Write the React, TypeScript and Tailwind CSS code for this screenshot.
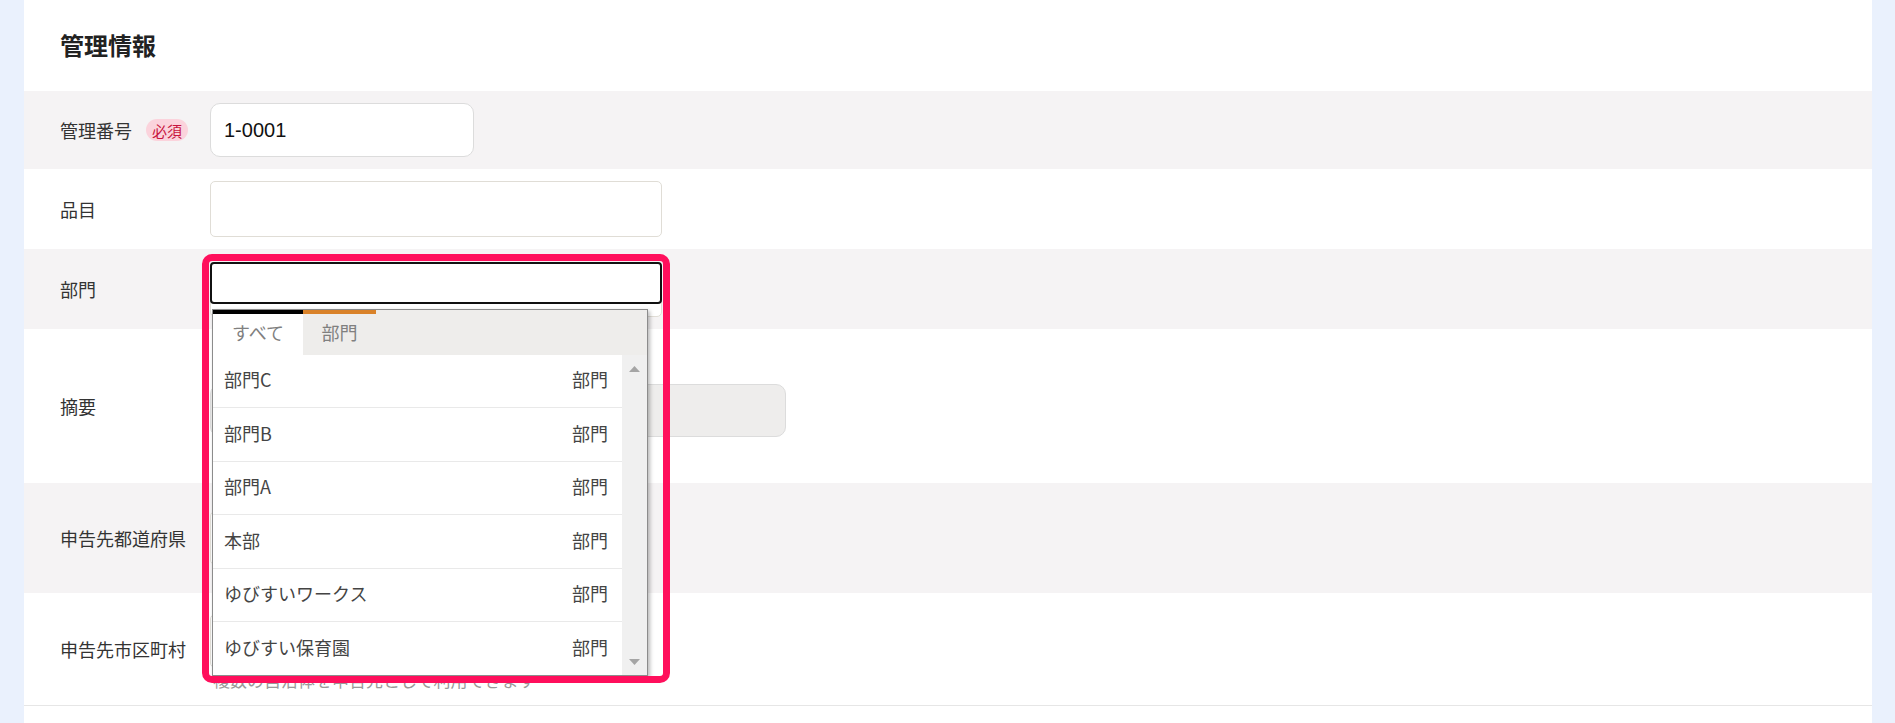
import React from "react";

const items = ["部門C", "部門B", "部門A", "本部", "ゆびすいワークス", "ゆびすい保育園"];

function Badge() {
  return (
    <span className="ml-[14px] inline-flex h-[22px] items-center rounded-full bg-[#fbd3dc] px-[6px] text-[15px] leading-none text-[#c8163f]">
      必須
    </span>
  );
}

function DeptDropdown() {
  return (
    <div className="absolute left-[1px] top-[46px] z-10 flex h-[367px] w-[436px] flex-col border border-[#8c8c8c] bg-white shadow-[2px_2px_4px_rgba(0,0,0,0.28)]">
      {/* tabs */}
      <div className="flex h-[45px] shrink-0 bg-[#eeedeb]">
        <div className="flex w-[90px] items-center justify-center border-t-4 border-black bg-white pb-[4px] text-[18px] text-[#808080]">
          すべて
        </div>
        <div className="flex w-[73px] items-center justify-center border-t-4 border-[#d98229] pb-[4px] text-[18px] text-[#808080]">
          部門
        </div>
      </div>

      <div className="flex min-h-0 flex-1">
        <div className="flex flex-1 flex-col">
          {items.map((name, i) => (
            <div
              key={name}
              className={`flex flex-1 items-center justify-between pb-[2px] pl-[11px] pr-[14px] text-[18px] text-[#444] ${
                i < items.length - 1 ? "border-b border-[#e9e9e9]" : ""
              }`}
            >
              <span>{name}</span>
              <span>部門</span>
            </div>
          ))}
        </div>
        {/* scrollbar */}
        <div className="flex w-[25px] flex-col items-center justify-between bg-[#f0f0f0] pb-[10px] pt-[11px]">
          <svg width="11" height="6" viewBox="0 0 11 6">
            <path d="M0 6 L5.5 0 L11 6 Z" fill="#a5a5a5" />
          </svg>
          <svg width="11" height="6" viewBox="0 0 11 6">
            <path d="M0 0 L5.5 6 L11 0 Z" fill="#a5a5a5" />
          </svg>
        </div>
      </div>
    </div>
  );
}

export default function App() {
  const label = "w-[150px] shrink-0 text-[18px] text-[#333]";

  return (
    <div className="min-h-screen bg-[#eaf1fd] pl-[24px] pr-[23px] font-['Noto_Sans_CJK_JP','Noto_Sans',sans-serif] leading-normal">
      <div className="bg-white">
        {/* 見出し */}
        <div className="flex h-[91px] items-center pb-[2px] pl-[36px]">
          <h2 className="text-[24px] font-bold text-[#222]">管理情報</h2>
        </div>

        {/* 管理番号 */}
        <div className="flex h-[78px] items-center bg-[#f5f3f4] pl-[36px]">
          <div className={`${label} flex items-center`}>
            管理番号
            <Badge />
          </div>
          <div className="flex h-[54px] w-[264px] items-center rounded-[10px] border border-[#dcdcdc] bg-white pl-[13px] font-['Liberation_Sans',sans-serif] text-[20px] text-[#111]">
            1-0001
          </div>
        </div>

        {/* 品目 */}
        <div className="flex h-[80px] items-center pl-[36px]">
          <div className={label}>品目</div>
          <div className="h-[56px] w-[452px] rounded-[5px] border border-[#e0ddd6] bg-white" />
        </div>

        {/* 部門 */}
        <div className="flex h-[80px] items-center bg-[#f5f3f4] pl-[36px]">
          <div className={label}>部門</div>
          <div className="relative h-[55px] w-[452px] rounded-[5px] border border-[#e0ddd6] bg-white">
            <div className="absolute left-[-1px] right-[-1px] top-[-1px] h-[42px] rounded-[4px] border-2 border-[#111] bg-white" />
            <DeptDropdown />
            <div className="pointer-events-none absolute left-[-9px] top-[-9px] z-20 h-[429px] w-[468px] rounded-[10px] border-[7px] border-[#ff0f5c]" />
          </div>
        </div>

        {/* 摘要 */}
        <div className="flex h-[154px] items-center pl-[36px]">
          <div className={label}>摘要</div>
          <div className="mt-[8px] h-[53px] w-[576px] rounded-[10px] border border-[#dcdcdc] bg-[#eeedec]" />
        </div>

        {/* 申告先都道府県 */}
        <div className="flex h-[110px] items-center bg-[#f5f3f4] pl-[36px]">
          <div className={label}>申告先都道府県</div>
          <div className="h-[54px] w-[300px] rounded-[5px] border border-[#e0ddd6] bg-white" />
        </div>

        {/* 申告先市区町村 */}
        <div className="flex h-[113px] items-center border-b border-[#e6e6e6] pl-[36px]">
          <div className={label}>申告先市区町村</div>
          <div className="flex flex-col pt-[8px]">
            <div className="h-[54px] w-[300px] rounded-[5px] border border-[#e0ddd6] bg-white" />
            <p className="pl-[3px] text-[17px] leading-[24px] text-[#999]">
              複数の自治体を申告先として利用できます
            </p>
          </div>
        </div>

        <div className="h-[17px]" />
      </div>
    </div>
  );
}
